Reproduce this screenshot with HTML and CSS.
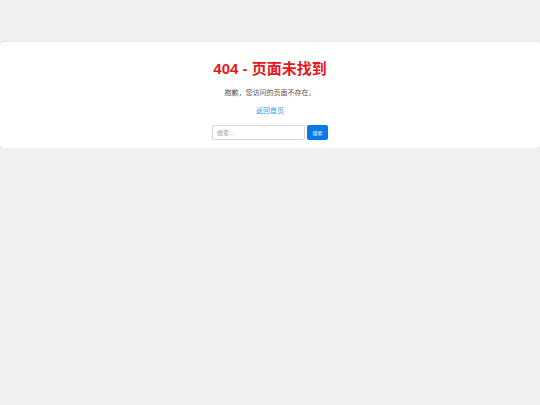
FILE: index.html
```html
<!DOCTYPE html>
<html lang="zh-CN">
<head>
<meta charset="utf-8">
<title>404 - 页面未找到</title>
<link rel="stylesheet" href="styles.css">
</head>
<body>
<main class="card">
  <h1 class="title">404 - 页面未找到</h1>
  <p class="message">抱歉，您访问的页面不存在。</p>
  <a class="home-link" href="#">返回首页</a>
  <form class="search" onsubmit="return false;">
    <input class="search-input" type="text" placeholder="搜索...">
    <button class="search-btn" type="submit">搜索</button>
  </form>
</main>
</body>
</html>
```
FILE: styles.css
```css
html, body {
  margin: 0;
  padding: 0;
}
body {
  background: #f0f0f0;
  font-family: "Liberation Sans", "Noto Sans CJK SC", sans-serif;
  padding-top: 42px;
}
.card {
  background: #ffffff;
  border-radius: 4px;
  box-shadow: 0 1px 4px rgba(0, 0, 0, 0.15);
  padding: 17px 0 8px;
  display: flex;
  flex-direction: column;
  align-items: center;
  text-align: center;
}
.title {
  margin: 0;
  font-size: 15px;
  line-height: 20px;
  font-weight: bold;
  color: #e3181b;
}
.message {
  margin: 9px 0 0;
  font-size: 7px;
  line-height: 10px;
  color: #555555;
}
.home-link {
  margin-top: 8px;
  font-size: 7px;
  line-height: 10px;
  color: #3a9bf0;
  text-decoration: none;
}
.search {
  margin-top: 9px;
  display: flex;
  gap: 2px;
  height: 15px;
}
.search-input {
  box-sizing: border-box;
  width: 93px;
  height: 15px;
  margin: 0;
  padding: 0 4px;
  border: 1px solid #d6d6d6;
  border-radius: 2px;
  font-family: inherit;
  font-size: 6px;
  color: #333;
  outline: none;
}
.search-input::placeholder {
  color: #999999;
}
.search-btn {
  box-sizing: border-box;
  width: 21px;
  height: 15px;
  margin: 0;
  padding: 0;
  border: none;
  border-radius: 2px;
  background: #0a79e6;
  color: #ffffff;
  font-family: inherit;
  font-size: 5px;
}
```
